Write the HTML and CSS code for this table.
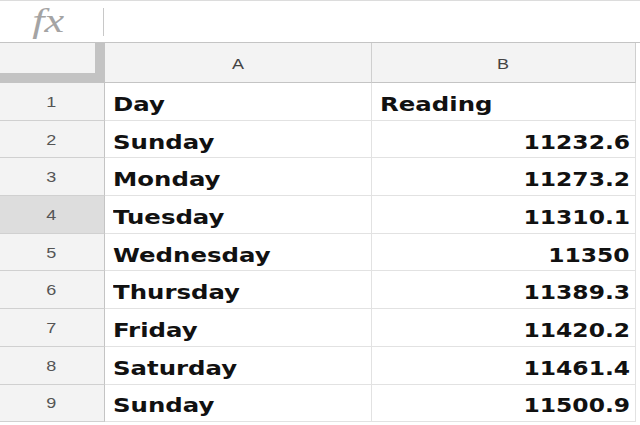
FILE: index.html
```html
<!DOCTYPE html>
<html>
<head>
<meta charset="utf-8">
<link rel="stylesheet" href="styles.css">
</head>
<body>
<div class="fbar">
  <div class="fx"><span class="fxt">fx</span></div>
  <div class="fsep"></div>
  <div class="finput"></div>
</div>
<div class="sheet">
  <div class="corner"></div>
  <div class="colh"><span class="wide">A</span></div>
  <div class="colh"><span class="wide">B</span></div>
  <div class="rest head"></div>

  <div class="rowh"><span class="wide">1</span></div><div class="cell"><span class="t">Day</span></div><div class="cell"><span class="t">Reading</span></div><div class="rest"></div>
  <div class="rowh"><span class="wide">2</span></div><div class="cell"><span class="t">Sunday</span></div><div class="cell num"><span class="t">11232.6</span></div><div class="rest"></div>
  <div class="rowh"><span class="wide">3</span></div><div class="cell"><span class="t">Monday</span></div><div class="cell num"><span class="t">11273.2</span></div><div class="rest"></div>
  <div class="rowh sel"><span class="wide">4</span></div><div class="cell"><span class="t">Tuesday</span></div><div class="cell num"><span class="t">11310.1</span></div><div class="rest"></div>
  <div class="rowh"><span class="wide">5</span></div><div class="cell"><span class="t">Wednesday</span></div><div class="cell num"><span class="t">11350</span></div><div class="rest"></div>
  <div class="rowh"><span class="wide">6</span></div><div class="cell"><span class="t">Thursday</span></div><div class="cell num"><span class="t">11389.3</span></div><div class="rest"></div>
  <div class="rowh"><span class="wide">7</span></div><div class="cell"><span class="t">Friday</span></div><div class="cell num"><span class="t">11420.2</span></div><div class="rest"></div>
  <div class="rowh"><span class="wide">8</span></div><div class="cell"><span class="t">Saturday</span></div><div class="cell num"><span class="t">11461.4</span></div><div class="rest"></div>
  <div class="rowh"><span class="wide">9</span></div><div class="cell"><span class="t">Sunday</span></div><div class="cell num"><span class="t">11500.9</span></div><div class="rest"></div>
</div>
</body>
</html>
```
FILE: styles.css
```css
html, body {
  margin: 0;
  padding: 0;
  background: #fff;
  width: 640px;
  height: 425px;
  overflow: hidden;
}
.fbar {
  height: 41px;
  border-top: 1px solid #dcdcdc;
  border-bottom: 1px solid #c4c4c4;
  display: flex;
  align-items: center;
  box-sizing: content-box;
}
.fx {
  width: 103px;
  display: flex;
  justify-content: center;
  padding-right: 6px;
  box-sizing: border-box;
  margin-top: -2px;
}
.fxt {
  display: inline-block;
  font-family: "Liberation Serif", "DejaVu Serif", serif;
  font-style: italic;
  font-size: 34px;
  color: #a4a4a4;
  line-height: 1;
  transform: scaleX(1.3);
}
.fsep {
  width: 1px;
  height: 28px;
  background: #c8c8c8;
}
.sheet {
  display: grid;
  grid-template-columns: 105px 267px 264px 1fr;
  grid-template-rows: 40px repeat(9, 37.7px);
}
.corner {
  background: #f3f3f3;
  border-right: 10px solid #c3c3c3;
  border-bottom: 10px solid #c3c3c3;
  box-sizing: border-box;
}
.colh {
  background: #f3f3f3;
  border-right: 1px solid #cfcfcf;
  border-bottom: 1px solid #c4c4c4;
  display: flex;
  align-items: center;
  justify-content: center;
  font-family: "Liberation Sans", Arial, sans-serif;
  font-size: 15px;
  color: #444;
  box-sizing: border-box;
  padding-top: 2px;
}
.wide {
  display: inline-block;
  transform: scaleX(1.2);
}
.rest {
  background: #fff;
}
.rest.head {
  border-left: 3px solid #fff;
}
.rowh {
  background: #f3f3f3;
  border-right: 1px solid #c4c4c4;
  border-bottom: 1px solid #d0d0d0;
  display: flex;
  align-items: center;
  justify-content: center;
  font-family: "Liberation Sans", Arial, sans-serif;
  font-size: 15px;
  color: #555;
  padding-right: 2px;
  box-sizing: border-box;
}
.rowh.sel {
  background: #dddddd;
}
.cell {
  border-right: 1px solid #e2e2e2;
  border-bottom: 1px solid #e2e2e2;
  display: flex;
  align-items: center;
  padding: 5px 5px 0 8px;
  font-family: "DejaVu Sans", Verdana, sans-serif;
  font-weight: bold;
  font-size: 20px;
  color: #111;
  box-sizing: border-box;
  white-space: nowrap;
}
.t {
  display: inline-block;
  transform: scaleX(1.22);
  transform-origin: left center;
}
.cell.num {
  justify-content: flex-end;
}
.cell.num .t {
  transform: scaleX(1.17);
  transform-origin: right center;
}
```
